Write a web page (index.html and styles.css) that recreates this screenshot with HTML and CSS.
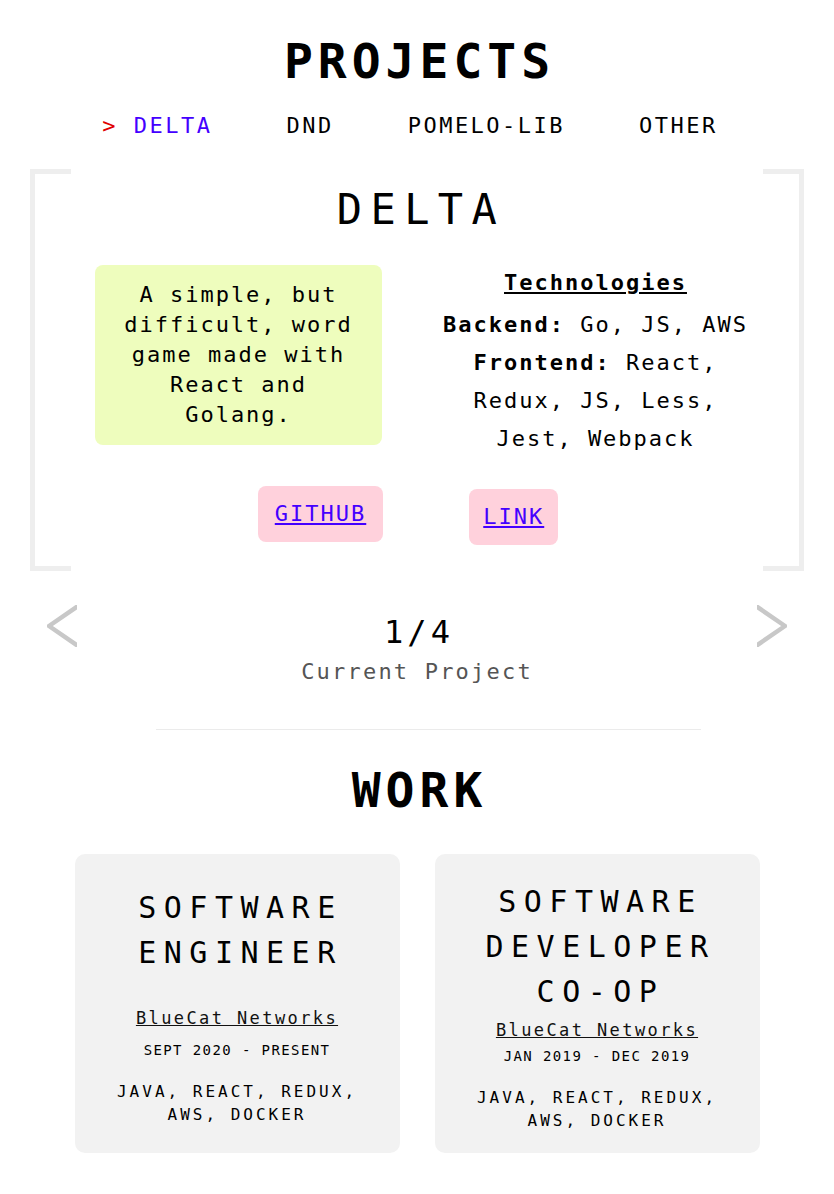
FILE: index.html
```html
<!DOCTYPE html>
<html lang="en">
<head>
<meta charset="utf-8">
<title>Projects</title>
<link rel="stylesheet" href="styles.css">
</head>
<body>
<main class="page">
  <section class="projects">
    <h2 class="section-title">PROJECTS</h2>
    <nav class="tabs">
      <a class="tab tab--active"><span class="tab-marker">&gt; </span>DELTA</a>
      <a class="tab">DND</a>
      <a class="tab">POMELO-LIB</a>
      <a class="tab">OTHER</a>
    </nav>
    <div class="project-frame">
      <h3 class="project-name">DELTA</h3>
      <div class="project-body">
        <div class="project-col">
          <p class="project-desc">A simple, but difficult, word game made with React and Golang.</p>
        </div>
        <div class="project-col tech">
          <div class="tech-title">Technologies</div>
          <p class="tech-line"><b>Backend:</b> Go, JS, AWS</p>
          <p class="tech-line"><b>Frontend:</b> React, Redux, JS, Less, Jest, Webpack</p>
        </div>
      </div>
      <div class="project-links">
        <a class="btn" href="#">GITHUB</a>
        <a class="btn btn--low" href="#">LINK</a>
      </div>
    </div>
    <div class="pager">
      <svg class="chev" width="30" height="42" viewBox="0 0 30 42" aria-hidden="true"><polyline points="40,-5.2 2,21 40,47.2"/></svg>
      <div class="pager-info">
        <div class="pager-count">1/4</div>
        <div class="pager-label">Current Project</div>
      </div>
      <svg class="chev" width="30" height="42" viewBox="0 0 30 42" aria-hidden="true"><polyline points="-10,-5.2 28,21 -10,47.2"/></svg>
    </div>
  </section>
  <hr class="divider">
  <section class="work">
    <h2 class="section-title section-title--work">WORK</h2>
    <div class="jobs">
      <article class="job job--short">
        <h4 class="job-title">SOFTWARE ENGINEER</h4>
        <a class="job-company" href="#">BlueCat Networks</a>
        <div class="job-date">SEPT 2020 - PRESENT</div>
        <div class="job-tech">JAVA, REACT, REDUX, AWS, DOCKER</div>
      </article>
      <article class="job">
        <h4 class="job-title">SOFTWARE DEVELOPER CO-OP</h4>
        <a class="job-company" href="#">BlueCat Networks</a>
        <div class="job-date">JAN 2019 - DEC 2019</div>
        <div class="job-tech">JAVA, REACT, REDUX, AWS, DOCKER</div>
      </article>
    </div>
  </section>
</main>
</body>
</html>
```

FILE: styles.css
```css
* { box-sizing: border-box; }

body {
  margin: 0;
  background: #fff;
  color: #000;
  font-family: "DejaVu Sans Mono", "Liberation Mono", monospace;
}

.page {
  padding-bottom: 40px;
}

.section-title {
  margin: 32px 0 0;
  font-size: 48px;
  line-height: 58px;
  font-weight: bold;
  letter-spacing: 5px;
  padding-left: 5px;
  text-align: center;
}

.tabs {
  display: flex;
  justify-content: center;
  gap: 74px;
  margin-top: 21px;
  padding-right: 14px;
  font-size: 22px;
  line-height: 30px;
  letter-spacing: 2.5px;
}

.tab {
  color: #000;
  cursor: pointer;
}

.tab--active {
  color: #4400ff;
}

.tab-marker {
  color: #e00000;
}

.project-frame {
  position: relative;
  margin: 28px 30px 0;
  padding: 16px 30px 26px;
}

.project-frame::before,
.project-frame::after {
  content: "";
  position: absolute;
  top: 0;
  bottom: 0;
  width: 36px;
  border: 5px solid #eeeeee;
}

.project-frame::before {
  left: 0;
  border-right: none;
}

.project-frame::after {
  right: 0;
  border-left: none;
}

.project-name {
  margin: 0;
  font-size: 42px;
  line-height: 50px;
  font-weight: normal;
  letter-spacing: 8.4px;
  padding-left: 8px;
  text-align: center;
}

.project-body {
  display: grid;
  grid-template-columns: 357px 357px;
  align-items: start;
  margin-top: 29px;
  font-size: 22px;
  letter-spacing: 2px;
  text-align: center;
}

.project-desc {
  width: 287px;
  margin: 1px auto 0;
  padding: 15px 20px;
  background: #eefdbd;
  border-radius: 8px;
  line-height: 30px;
}

.tech {
  padding: 0 24px;
  line-height: 38px;
}

.tech-title {
  font-weight: bold;
  text-decoration: underline;
  margin-bottom: 4px;
}

.tech-line {
  margin: 0;
}

.project-links {
  display: flex;
  justify-content: center;
  align-items: flex-start;
  gap: 86px;
  margin-top: 28px;
  padding-right: 18px;
}

.btn {
  display: block;
  padding: 15px 17px;
  background: #ffd1dc;
  border-radius: 8px;
  color: #4400ff;
  font-size: 22px;
  line-height: 26px;
  letter-spacing: 2px;
}

.btn--low {
  margin-top: 3px;
  padding: 15px 14px;
}

.pager {
  display: flex;
  justify-content: space-between;
  align-items: flex-start;
  margin-top: 34px;
  padding: 0 47px;
}

.chev {
  display: block;
  flex: none;
}

.chev polyline {
  fill: none;
  stroke: #c8c8c8;
  stroke-width: 4.5;
}

.pager-info {
  padding-top: 7px;
  text-align: center;
}

.pager-count {
  font-size: 32px;
  line-height: 40px;
  letter-spacing: 4px;
  padding-left: 4px;
}

.pager-label {
  margin-top: 5px;
  font-size: 22px;
  line-height: 30px;
  letter-spacing: 2.2px;
  color: #555;
}

.divider {
  width: 545px;
  margin: 42px 0 0 156px;
  border: none;
  border-top: 1px solid #ebebeb;
}

.section-title--work {
  margin-top: 31px;
}

.jobs {
  display: grid;
  grid-template-columns: 325px 325px;
  justify-content: center;
  gap: 35px;
  margin-top: 35px;
}

.job {
  display: flex;
  flex-direction: column;
  align-items: center;
  padding: 25px 20px 21px;
  background: #f2f2f2;
  border-radius: 10px;
  text-align: center;
}

.job-title {
  margin: 0 0 4px;
  font-size: 30px;
  line-height: 45px;
  font-weight: normal;
  letter-spacing: 7.5px;
  padding-left: 7px;
}

.job-company {
  display: block;
  margin-bottom: 4px;
  color: #111;
  font-size: 17px;
  line-height: 24px;
  letter-spacing: 2.4px;
}

.job-date {
  margin-bottom: 20px;
  font-size: 14px;
  line-height: 20px;
  letter-spacing: 1.4px;
}

.job-tech {
  font-size: 16px;
  line-height: 23px;
  letter-spacing: 3px;
}

.job--short {
  padding-top: 31px;
}

.job--short .job-title {
  margin-bottom: 31px;
}

.job--short .job-company {
  margin-bottom: 10px;
}
```
